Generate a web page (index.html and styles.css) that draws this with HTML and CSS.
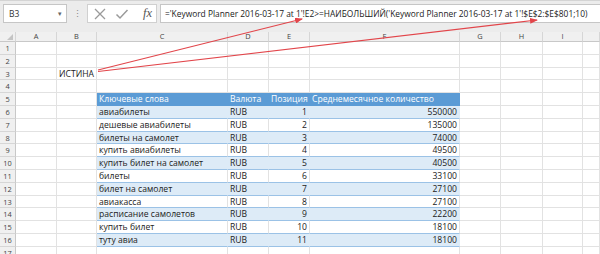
FILE: index.html
```html
<!DOCTYPE html>
<html lang="ru">
<head>
<meta charset="utf-8">
<title>Excel</title>
<link rel="stylesheet" href="styles.css">
</head>
<body>
<div class="app">
  <div class="fbar">
    <div class="namebox"><span>B3</span><span class="dd">&#9662;</span></div>
    <div class="dots">&#8942;</div>
    <div class="btns">
      <svg class="ico" width="14" height="12" viewBox="0 0 14 12"><path d="M2 1 L12 11 M12 1 L2 11" stroke="#9a9a9a" stroke-width="1.3" fill="none"/></svg>
      <svg class="ico" width="14" height="12" viewBox="0 0 14 12"><path d="M1.5 6.5 L5 10 L12.5 2" stroke="#9a9a9a" stroke-width="1.5" fill="none"/></svg>
      <span class="fx">fx</span>
    </div>
    <div class="formula">='Keyword Planner 2016-03-17 at 1'!E2&gt;=НАИБОЛЬШИЙ('Keyword Planner 2016-03-17 at 1'!$E$2:$E$801;10)</div>
  </div>
  <div class="sheet">
    <div class="ch corner"><span class="tri"></span></div>
    <div class="ch">A</div><div class="ch">B</div><div class="ch">C</div><div class="ch">D</div><div class="ch">E</div><div class="ch">F</div><div class="ch">G</div><div class="ch">H</div><div class="ch">I</div><div class="ch"></div>

    <div class="rh">1</div><div class="c"></div><div class="c"></div><div class="c"></div><div class="c"></div><div class="c"></div><div class="c"></div><div class="c"></div><div class="c"></div><div class="c"></div><div class="c"></div>
    <div class="rh">2</div><div class="c"></div><div class="c"></div><div class="c"></div><div class="c"></div><div class="c"></div><div class="c"></div><div class="c"></div><div class="c"></div><div class="c"></div><div class="c"></div>
    <div class="rh">3</div><div class="c"></div><div class="c ctr">ИСТИНА</div><div class="c"></div><div class="c"></div><div class="c"></div><div class="c"></div><div class="c"></div><div class="c"></div><div class="c"></div><div class="c"></div>
    <div class="rh">4</div><div class="c"></div><div class="c"></div><div class="c"></div><div class="c"></div><div class="c"></div><div class="c"></div><div class="c"></div><div class="c"></div><div class="c"></div><div class="c"></div>
    <div class="rh">5</div><div class="c"></div><div class="c"></div><div class="c th">Ключевые слова</div><div class="c th">Валюта</div><div class="c th">Позиция</div><div class="c th">Среднемесячное количество</div><div class="c"></div><div class="c"></div><div class="c"></div><div class="c"></div>
    <div class="rh">6</div><div class="c"></div><div class="c"></div><div class="c tb">авиабилеты</div><div class="c tb">RUB</div><div class="c tb num">1</div><div class="c tb num">550000</div><div class="c"></div><div class="c"></div><div class="c"></div><div class="c"></div>
    <div class="rh">7</div><div class="c"></div><div class="c"></div><div class="c tw">дешевые авиабилеты</div><div class="c tw">RUB</div><div class="c tw num">2</div><div class="c tw num">135000</div><div class="c"></div><div class="c"></div><div class="c"></div><div class="c"></div>
    <div class="rh">8</div><div class="c"></div><div class="c"></div><div class="c tb">билеты на самолет</div><div class="c tb">RUB</div><div class="c tb num">3</div><div class="c tb num">74000</div><div class="c"></div><div class="c"></div><div class="c"></div><div class="c"></div>
    <div class="rh">9</div><div class="c"></div><div class="c"></div><div class="c tw">купить авиабилеты</div><div class="c tw">RUB</div><div class="c tw num">4</div><div class="c tw num">49500</div><div class="c"></div><div class="c"></div><div class="c"></div><div class="c"></div>
    <div class="rh">10</div><div class="c"></div><div class="c"></div><div class="c tb">купить билет на самолет</div><div class="c tb">RUB</div><div class="c tb num">5</div><div class="c tb num">40500</div><div class="c"></div><div class="c"></div><div class="c"></div><div class="c"></div>
    <div class="rh">11</div><div class="c"></div><div class="c"></div><div class="c tw">билеты</div><div class="c tw">RUB</div><div class="c tw num">6</div><div class="c tw num">33100</div><div class="c"></div><div class="c"></div><div class="c"></div><div class="c"></div>
    <div class="rh">12</div><div class="c"></div><div class="c"></div><div class="c tb">билет на самолет</div><div class="c tb">RUB</div><div class="c tb num">7</div><div class="c tb num">27100</div><div class="c"></div><div class="c"></div><div class="c"></div><div class="c"></div>
    <div class="rh">13</div><div class="c"></div><div class="c"></div><div class="c tw">авиакасса</div><div class="c tw">RUB</div><div class="c tw num">8</div><div class="c tw num">27100</div><div class="c"></div><div class="c"></div><div class="c"></div><div class="c"></div>
    <div class="rh">14</div><div class="c"></div><div class="c"></div><div class="c tb">расписание самолетов</div><div class="c tb">RUB</div><div class="c tb num">9</div><div class="c tb num">22200</div><div class="c"></div><div class="c"></div><div class="c"></div><div class="c"></div>
    <div class="rh">15</div><div class="c"></div><div class="c"></div><div class="c tw">купить билет</div><div class="c tw">RUB</div><div class="c tw num">10</div><div class="c tw num">18100</div><div class="c"></div><div class="c"></div><div class="c"></div><div class="c"></div>
    <div class="rh">16</div><div class="c"></div><div class="c"></div><div class="c tb">туту авиа</div><div class="c tb">RUB</div><div class="c tb num">11</div><div class="c tb num">18100</div><div class="c"></div><div class="c"></div><div class="c"></div><div class="c"></div>
    <div class="rh">17</div><div class="c"></div><div class="c"></div><div class="c"></div><div class="c"></div><div class="c"></div><div class="c"></div><div class="c"></div><div class="c"></div><div class="c"></div><div class="c"></div>
  </div>
  <svg class="arrows" width="600" height="254" viewBox="0 0 600 254">
    <defs>
      <marker id="ah" markerWidth="8" markerHeight="6" refX="7" refY="3" orient="auto" markerUnits="userSpaceOnUse">
        <path d="M0 0 L8 3 L0 6 Z" fill="#e2454a"/>
      </marker>
    </defs>
    <line x1="98" y1="70" x2="302" y2="19" stroke="#e2454a" stroke-width="1.2" marker-end="url(#ah)"/>
    <line x1="98" y1="71.5" x2="537" y2="20" stroke="#e2454a" stroke-width="1.2" marker-end="url(#ah)"/>
  </svg>
</div>
</body>
</html>
```
FILE: styles.css
```css
html, body {
  margin: 0;
  padding: 0;
  background: #ffffff;
}
body {
  width: 600px;
  height: 254px;
  overflow: hidden;
  font-family: "Open Sans", "Noto Sans", sans-serif;
}
.app {
  position: relative;
  width: 600px;
  height: 254px;
  overflow: hidden;
}
.fbar {
  height: 32px;
  box-sizing: border-box;
  background: #ececec;
  border-top: 1px solid #d4d4d4;
  display: flex;
  align-items: flex-start;
  padding: 3px 0 0 3px;
}
.namebox {
  width: 64px;
  height: 19px;
  box-sizing: border-box;
  background: #fff;
  border: 1px solid #c6c6c6;
  display: flex;
  align-items: center;
  justify-content: space-between;
  padding: 0 4px 0 5px;
  font-size: 8.5px;
  color: #333;
}
.dd {
  font-size: 7px;
  color: #666;
}
.dots {
  width: 20px;
  height: 19px;
  display: flex;
  align-items: center;
  justify-content: center;
  color: #888;
  font-size: 9px;
}
.btns {
  width: 70px;
  height: 19px;
  box-sizing: border-box;
  background: #fff;
  border: 1px solid #d0d0d0;
  display: flex;
  align-items: center;
  gap: 8px;
  padding-left: 5px;
}
.fx {
  font-family: "Liberation Serif", serif;
  font-style: italic;
  font-size: 12.5px;
  color: #555;
  margin-left: 6px;
}
.formula {
  flex: 1;
  height: 19px;
  box-sizing: border-box;
  background: #fff;
  border: 1px solid #c6c6c6;
  border-right: none;
  margin-left: 3px;
  padding-left: 4px;
  font-size: 8.4px;
  line-height: 17px;
  color: #222;
  white-space: nowrap;
  overflow: hidden;
}
.sheet {
  display: grid;
  grid-template-columns: 16px 41px 40px 131px 41px 41px 150px 41px 42px 40px 1fr;
  grid-template-rows: 10px repeat(17, 12.8px);
  font-size: 8.6px;
  color: #222;
}
.ch {
  background: #f0f0f0;
  border-right: 1px solid #d6d6d6;
  border-bottom: 1px solid #c8c8c8;
  box-sizing: border-box;
  text-align: center;
  font-size: 7.4px;
  line-height: 9px;
  color: #444;
}
.corner {
  position: relative;
}
.tri {
  position: absolute;
  right: 2px;
  bottom: 1px;
  width: 0;
  height: 0;
  border-left: 6px solid transparent;
  border-bottom: 6px solid #c4c4c4;
}
.rh {
  background: #f0f0f0;
  border-right: 1px solid #c8c8c8;
  border-bottom: 1px solid #d6d6d6;
  box-sizing: border-box;
  text-align: center;
  font-size: 7.4px;
  line-height: 12px;
  color: #444;
}
.c {
  border-right: 1px solid #e2e2e2;
  border-bottom: 1px solid #e2e2e2;
  box-sizing: border-box;
  line-height: 12px;
  padding: 0 2px;
  white-space: nowrap;
  overflow: visible;
}
.ctr {
  text-align: center;
}
.num {
  text-align: right;
}
.th {
  background: #5b9bd5;
  color: #ffffff;
  border-right-color: #5b9bd5;
  border-bottom-color: #5b9bd5;
}
.tb {
  background: #ddebf7;
  border-right-color: #ddebf7;
  border-bottom-color: #9bc2e6;
}
.tw {
  background: #ffffff;
  border-right-color: #e2e2e2;
  border-bottom-color: #9bc2e6;
}
.arrows {
  position: absolute;
  left: 0;
  top: 0;
  pointer-events: none;
}
```
